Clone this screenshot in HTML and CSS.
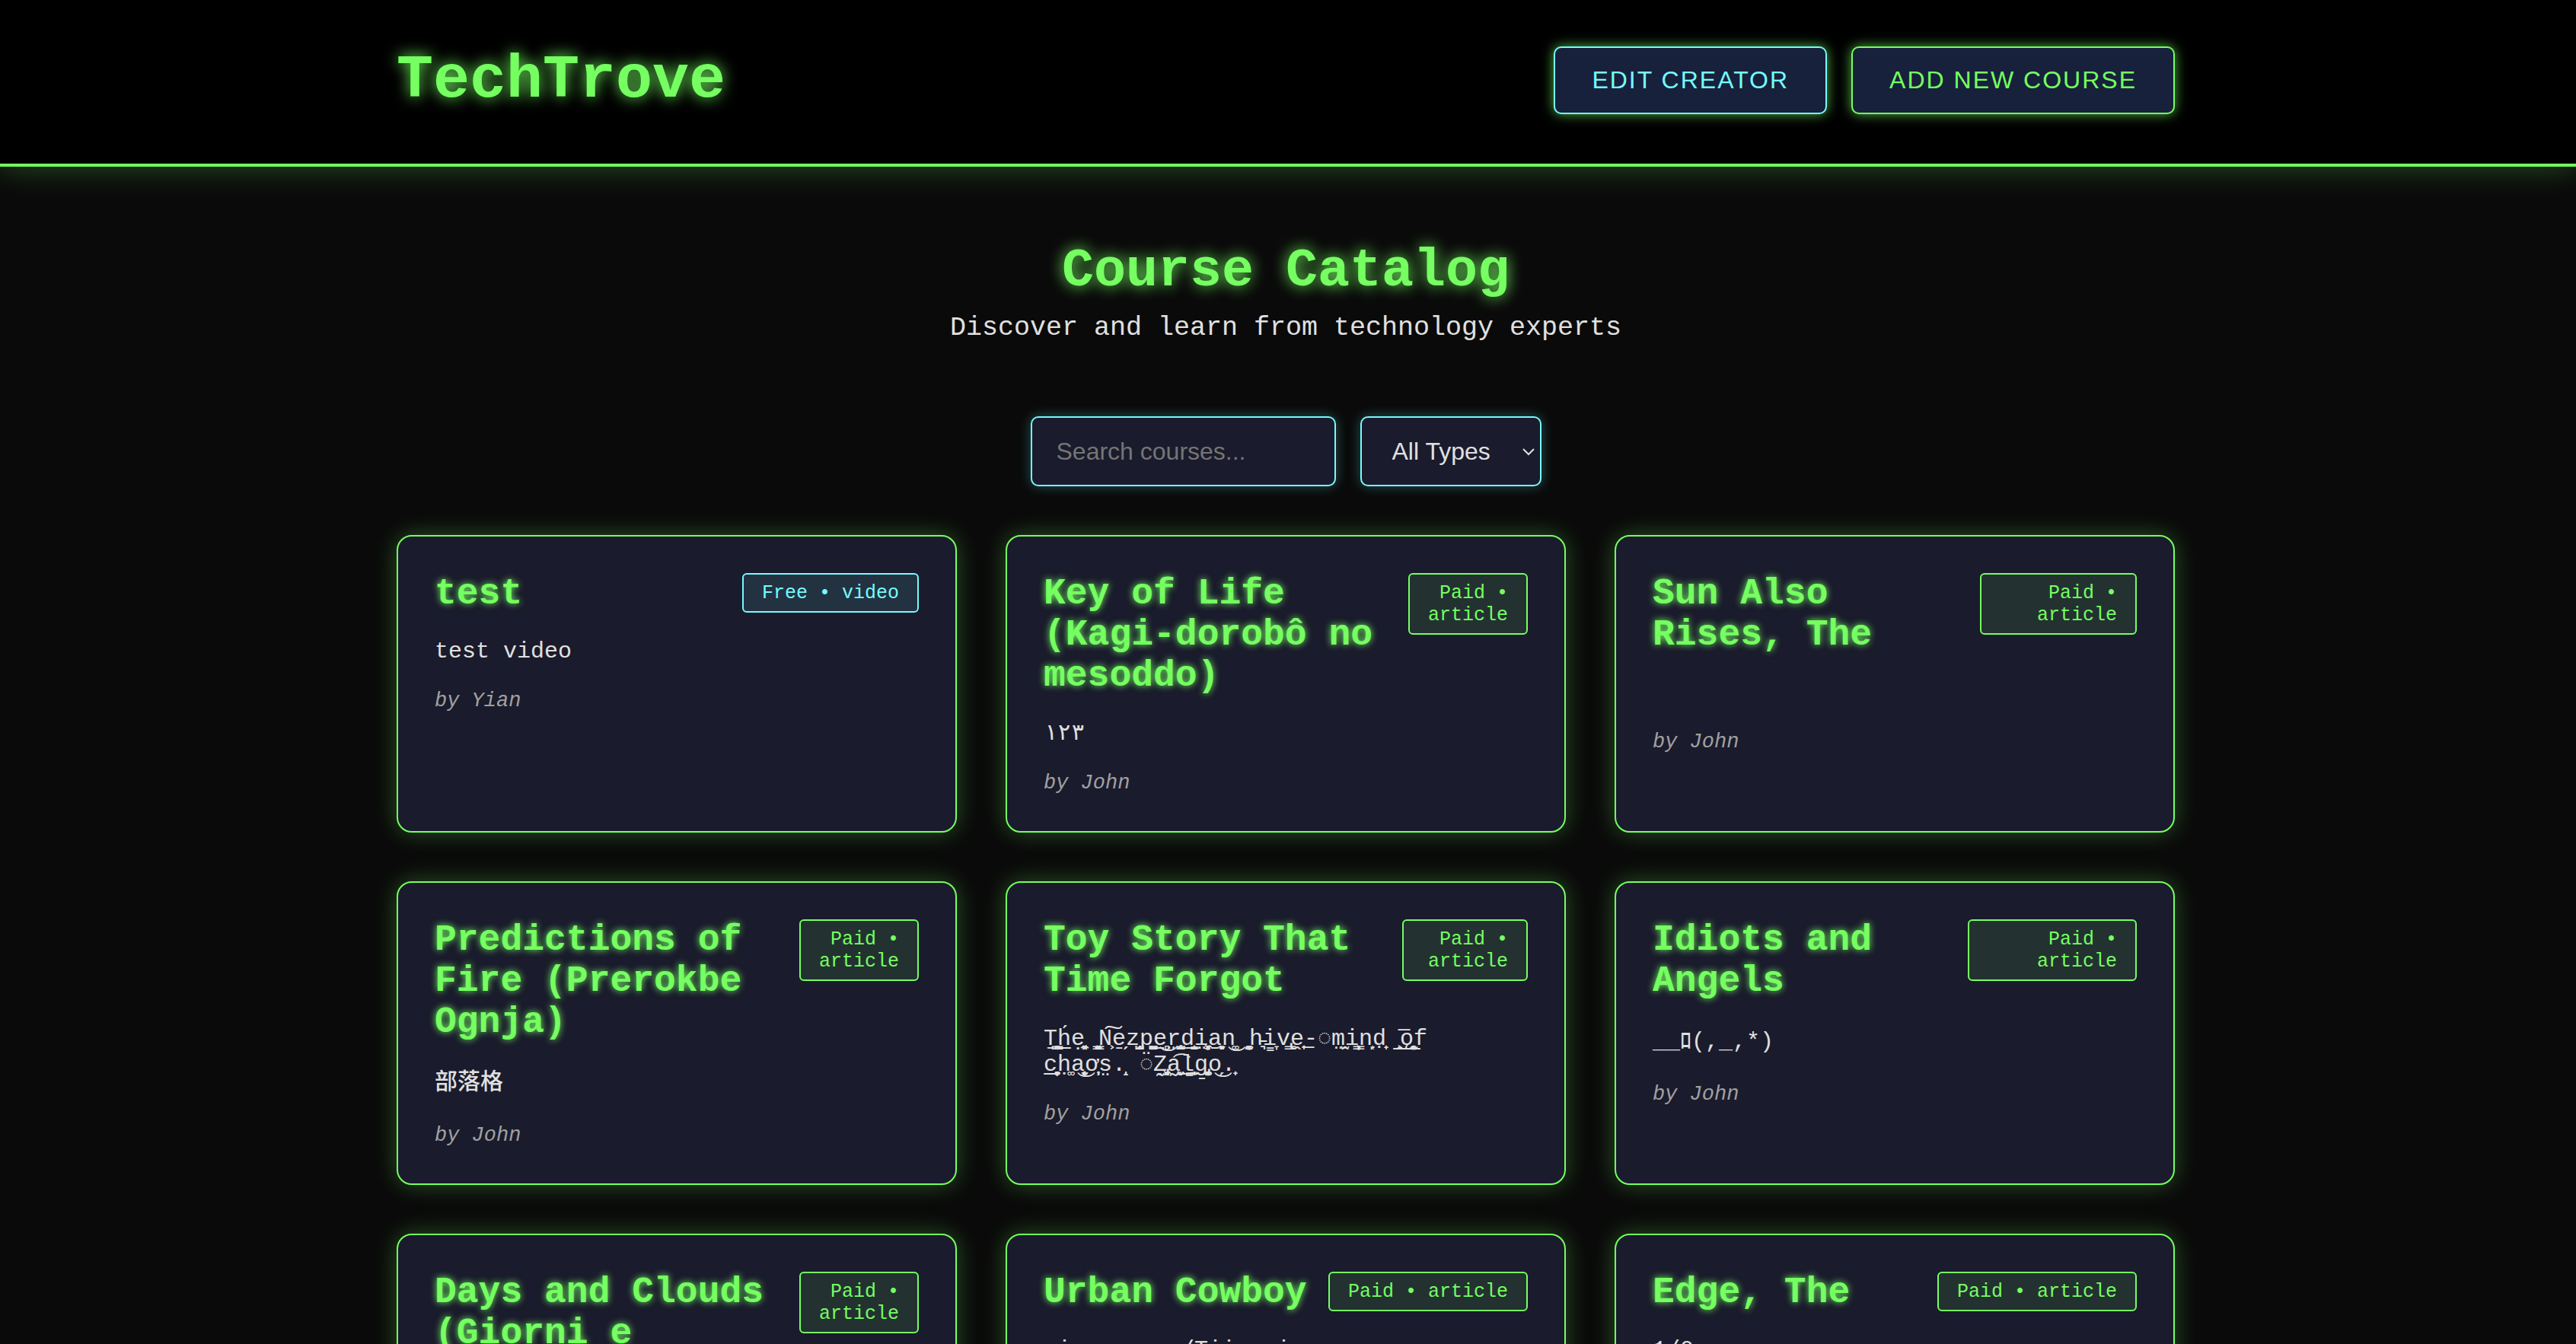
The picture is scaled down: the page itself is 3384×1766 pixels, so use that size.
FILE: index.html
```html
<!DOCTYPE html>
<html lang="en">
<head>
  <meta charset="utf-8">
  <title>TechTrove</title>
  <link rel="stylesheet" href="styles.css">
</head>
<body>
  <header class="site-header">
    <div class="container site-header__row">
      <h1 class="logo">TechTrove</h1>
      <nav class="actions">
        <button class="btn btn--cyan" type="button">EDIT CREATOR</button>
        <button class="btn" type="button">ADD NEW COURSE</button>
      </nav>
    </div>
  </header>
  <main class="container catalog">
    <section class="hero">
      <h2 class="hero__title">Course Catalog</h2>
      <p class="hero__text">Discover and learn from technology experts</p>
    </section>
    <form class="filters">
      <input class="field field--search" type="text" placeholder="Search courses..." aria-label="Search courses">
      <div class="select">
        <select class="field field--select" aria-label="Course type">
          <option>All Types</option>
          <option>Free</option>
          <option>Paid</option>
        </select>
        <svg class="select__arrow" viewBox="0 0 16 10" aria-hidden="true"><path d="M1 1l7 7 7-7" fill="none" stroke="currentColor" stroke-width="2"/></svg>
      </div>
    </form>
    <section class="grid">
      <article class="card">
        <div class="card__head">
          <h3 class="card__title">test</h3>
          <div class="card__meta"><span class="badge badge--free">Free • video</span></div>
        </div>
        <p class="card__text">test video</p>
        <p class="card__author">by Yian</p>
      </article>
      <article class="card">
        <div class="card__head">
          <h3 class="card__title">Key of Life (Kagi-dorobô no mesoddo)</h3>
          <div class="card__meta"><span class="badge">Paid • article</span></div>
        </div>
        <p class="card__text">١٢٣</p>
        <p class="card__author">by John</p>
      </article>
      <article class="card">
        <div class="card__head">
          <h3 class="card__title">Sun Also Rises, The</h3>
          <div class="card__meta"><span class="badge">Paid • article</span></div>
        </div>
        <p class="card__text">&nbsp;</p>
        <p class="card__author">by John</p>
      </article>
      <article class="card">
        <div class="card__head">
          <h3 class="card__title">Predictions of Fire (Prerokbe Ognja)</h3>
          <div class="card__meta"><span class="badge">Paid • article</span></div>
        </div>
        <p class="card__text card__text--cjk" lang="zh-Hant">部落格</p>
        <p class="card__author">by John</p>
      </article>
      <article class="card">
        <div class="card__head">
          <h3 class="card__title">Toy Story That Time Forgot</h3>
          <div class="card__meta"><span class="badge">Paid • article</span></div>
        </div>
        <p class="card__text">Ṯ̤͍̥͇͈h̲́e͏͓̼̗̙̼̣͔ ͇̜̱̠͓͍ͅN͕͠e̗̱z̘̝̜̺͙p̤̺̹͍̯͚e̠̻̠͜r̨̤͍̺̖͔̖̖d̠̟̭̬̝͟i̦͖̩͓͔̤a̠̗̬͉̙n͚͜ ̻̞̰͚ͅh̵͉i̳̞v̢͇ḙ͎͟-◌m̤̭̫i͕͇̝̦n̗͙ḍ̟ ̯̲͕͞ǫ̟̯̰̲͙̻̝f<br>c̦͍̲̞͍̩̙ḥ͚a̮͎̟̙͜ơ̩̹͎s̤.̝̝ ◌Z̡̖̜͖̰̣͉̜a͖̰͙̬͡l̲̫̳͍̩g̡̟̼̱͚̞̬ͅo̗͜.̟</p>
        <p class="card__author">by John</p>
      </article>
      <article class="card">
        <div class="card__head">
          <h3 class="card__title">Idiots and Angels</h3>
          <div class="card__meta"><span class="badge">Paid • article</span></div>
        </div>
        <p class="card__text card__text--cjk">__ﾛ(,_,*)</p>
        <p class="card__author">by John</p>
      </article>
      <article class="card">
        <div class="card__head">
          <h3 class="card__title">Days and Clouds (Giorni e nuvole)</h3>
          <div class="card__meta"><span class="badge">Paid • article</span></div>
        </div>
        <p class="card__text">&nbsp;</p>
        <p class="card__author">by John</p>
      </article>
      <article class="card">
        <div class="card__head">
          <h3 class="card__title">Urban Cowboy</h3>
          <div class="card__meta"><span class="badge">Paid • article</span></div>
        </div>
        <p class="card__text">ai source /Tii eni</p>
        <p class="card__author">by John</p>
      </article>
      <article class="card">
        <div class="card__head">
          <h3 class="card__title">Edge, The</h3>
          <div class="card__meta"><span class="badge">Paid • article</span></div>
        </div>
        <p class="card__text">1/0</p>
        <p class="card__author">by John</p>
      </article>
    </section>
  </main>
</body>
</html>
```
FILE: styles.css
```css
:root {
  --green: #75ff61;
  --cyan: #75fbff;
  --text: #e0e0e0;
  --panel: #1a1b2c;
}

* {
  box-sizing: border-box;
}

html {
  background: #0a0a0a;
  scrollbar-width: none;
}

body {
  margin: 0;
  background: #0a0a0a;
  color: var(--text);
  font-family: "Liberation Mono", "DejaVu Sans Mono", monospace;
}

h1, h2, h3, p {
  margin: 0;
}

.container {
  max-width: 2406px;
  margin: 0 auto;
  padding: 0 38px 0 32px;
}

.site-header {
  padding: 60px 0 64px;
  background: #000;
  border-bottom: 4px solid var(--green);
  box-shadow: 0 0 40px rgba(117, 255, 97, 0.3);
}

.site-header__row {
  display: flex;
  justify-content: space-between;
  align-items: center;
}

.logo {
  font-size: 80px;
  line-height: 91px;
  color: var(--green);
  text-shadow: 0 0 20px var(--green);
}

.actions {
  display: flex;
  gap: 32px;
}

.btn {
  padding: 24px 48px;
  border: 2px solid var(--green);
  border-radius: 10px;
  background: #17213b;
  color: var(--green);
  font: 32px/37px "Liberation Sans", sans-serif;
  letter-spacing: 2px;
  box-shadow: 0 0 16px rgba(117, 255, 97, 0.7);
}

.btn--cyan {
  border-color: var(--cyan);
  color: var(--cyan);
}

.catalog {
  padding-top: 98px;
  padding-bottom: 64px;
}

.hero {
  margin-bottom: 96px;
  text-align: center;
}

.hero__title {
  margin-bottom: 15px;
  font-size: 70px;
  line-height: 79px;
  color: var(--green);
  text-shadow: 0 0 20px var(--green);
}

.hero__text {
  font-size: 35px;
  line-height: 40px;
}

.filters {
  display: flex;
  justify-content: center;
  gap: 32px;
  margin-bottom: 64px;
}

.field {
  height: 92px;
  border: 2px solid var(--cyan);
  border-radius: 10px;
  background: var(--panel);
  color: var(--text);
  font: 32px/37px "Liberation Sans", sans-serif;
  box-shadow: 0 0 16px rgba(117, 251, 255, 0.3);
}

.field--search {
  width: 401px;
  padding: 0 32px;
}

.field--search::placeholder {
  color: #757575;
}

.select {
  position: relative;
}

.field--select {
  width: 238px;
  padding: 0 40px;
  appearance: none;
}

.select__arrow {
  position: absolute;
  top: 42px;
  right: 9px;
  width: 16px;
  height: 10px;
  color: var(--text);
  pointer-events: none;
}

.grid {
  display: grid;
  grid-template-columns: repeat(3, 1fr);
  gap: 64px;
}

.card {
  padding: 48px;
  border: 2px solid var(--green);
  border-radius: 20px;
  background: var(--panel);
  box-shadow: 0 0 30px rgba(117, 255, 97, 0.3);
}

.card__head {
  display: flex;
  justify-content: space-between;
  align-items: flex-start;
  margin-bottom: 32px;
}

.card__title {
  font-size: 48px;
  line-height: 54px;
  color: var(--green);
  text-shadow: 0 0 10px var(--green);
}

.card__meta {
  text-align: right;
}

.badge {
  display: block;
  padding: 10px 24px 9px;
  border: 2px solid var(--green);
  border-radius: 6px;
  background: rgba(117, 255, 97, 0.1);
  color: var(--green);
  font-size: 25px;
  line-height: 29px;
}

.badge--free {
  border-color: var(--cyan);
  background: rgba(117, 251, 255, 0.1);
  color: var(--cyan);
}

.card__text {
  margin-bottom: 33px;
  font-size: 30px;
  line-height: 34px;
}

.card__text--cjk {
  font-family: "Liberation Mono", "Noto Sans CJK JP", monospace;
  font-weight: 500;
  line-height: 42px;
}

.card__author {
  color: #a0a0a0;
  font-size: 27px;
  line-height: 30px;
  font-style: italic;
}
```
